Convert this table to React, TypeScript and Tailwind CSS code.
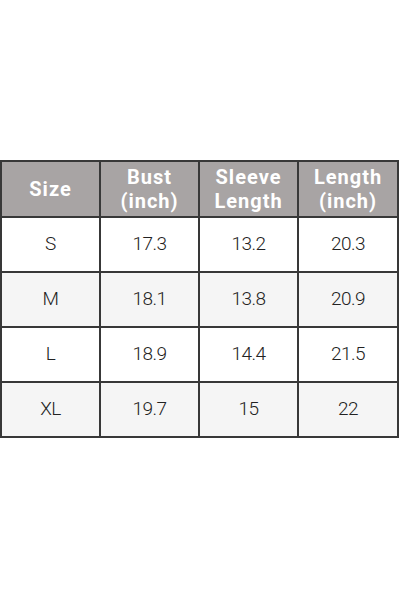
import React from 'react';

const rows = [
  ['S', '17.3', '13.2', '20.3'],
  ['M', '18.1', '13.8', '20.9'],
  ['L', '18.9', '14.4', '21.5'],
  ['XL', '19.7', '15', '22'],
];

const headers = [['Size'], ['Bust', '(inch)'], ['Sleeve', 'Length'], ['Length', '(inch)']];

export default function App() {
  return (
    <div className="w-[400px] h-[600px] bg-white pt-[160px]" style={{ fontFamily: 'Roboto, "Liberation Sans", sans-serif' }}>
      <table className="w-[397px] table-fixed border-collapse border-2 border-[#383838]">
        <colgroup>
          <col className="w-[99px]" />
          <col className="w-[99px]" />
          <col className="w-[99px]" />
          <col className="w-[100px]" />
        </colgroup>
        <thead>
          <tr className="h-[56px] bg-[#a8a4a4]">
            {headers.map((h, i) => (
              <th key={i} className="border-2 border-[#383838] text-white font-bold text-[20px] leading-[24px] tracking-[1px] text-center align-middle">
                {h.map((line, j) => (
                  <div key={j}>{line}</div>
                ))}
              </th>
            ))}
          </tr>
        </thead>
        <tbody>
          {rows.map((r, i) => (
            <tr key={i} className={`h-[55px] ${i % 2 === 1 ? 'bg-[#f5f5f5]' : 'bg-white'}`}>
              {r.map((c, j) => (
                <td key={j} className="border-2 border-[#383838] text-center align-middle text-[19px] font-light text-[#222] tracking-[-0.5px]">
                  {c}
                </td>
              ))}
            </tr>
          ))}
        </tbody>
      </table>
    </div>
  );
}
